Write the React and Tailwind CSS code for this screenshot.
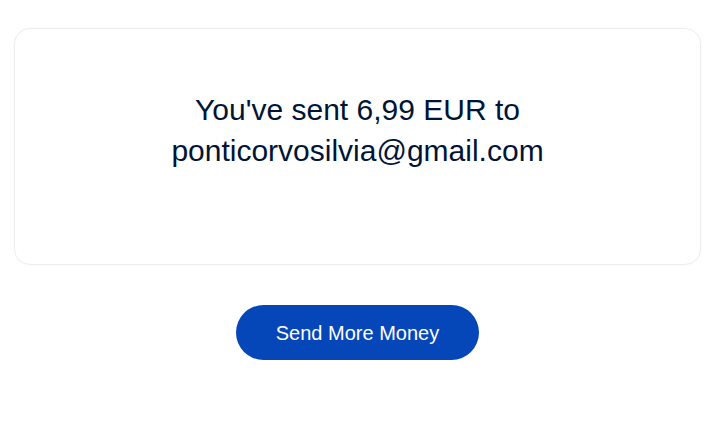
export default function App() {
  return (
    <div className="min-h-screen w-full bg-white font-['Liberation_Sans',Arial,sans-serif]">
      <div className="pl-[14px] pr-[12px] pt-[28px]">
        <div className="h-[237px] rounded-[16px] border border-[#ededed] shadow-[0_0_3px_rgba(0,0,0,0.04)] pt-[60px] text-center">
          <p className="text-[30px] leading-[41px] text-[#001435]">
            You've sent 6,99 EUR to
            <br />
            ponticorvosilvia@gmail.com
          </p>
        </div>
      </div>
      <div className="flex justify-center pt-[40px] pl-[2px]">
        <button className="w-[243px] h-[55px] rounded-full bg-[#0546b8] text-white text-[20px]">
          Send More Money
        </button>
      </div>
    </div>
  );
}
